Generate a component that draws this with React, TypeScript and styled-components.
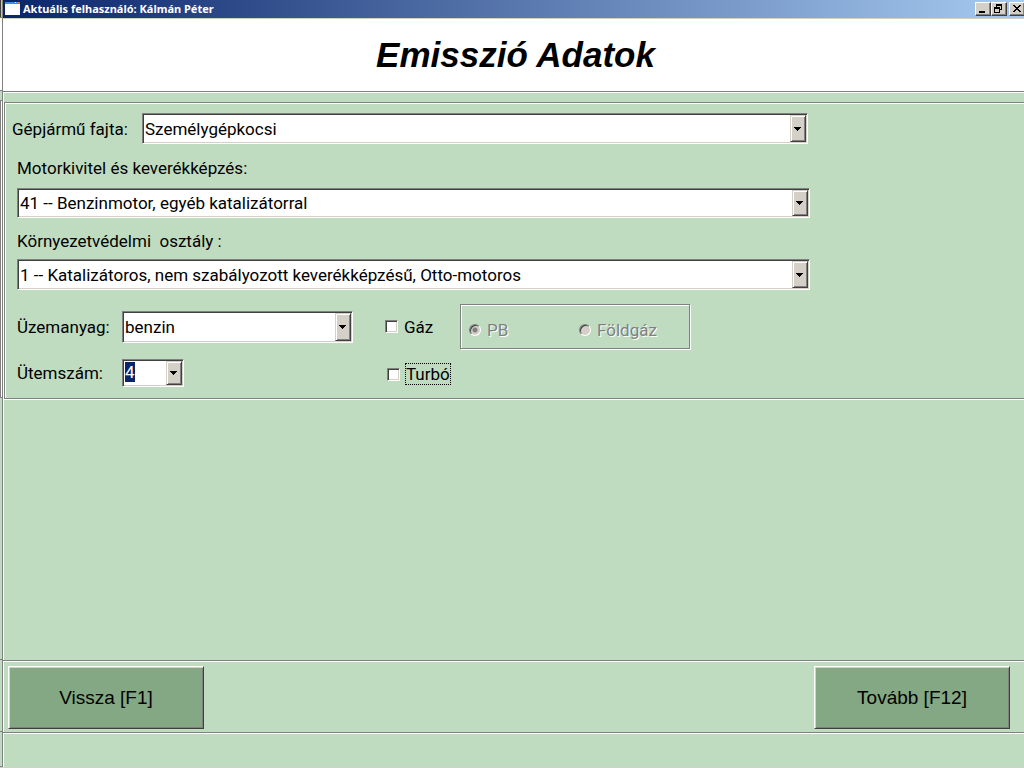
import React from "react";
import styled, { createGlobalStyle } from "styled-components";

const face = "#d4d0c8";
const green = "#c0dcc0";
const formFont = 'Roboto, "Liberation Sans", sans-serif';
const displayFont = '"Liberation Sans", Arial, sans-serif';

const GlobalStyle = createGlobalStyle`
  *, *::before, *::after { box-sizing: border-box; }
  body { margin: 0; background: ${green}; font: 17px/20px ${formFont}; color: #000; }
`;

const Screen = styled.div`
  display: flex;
  min-height: 100vh;
  border-bottom: 1px solid ${face};
`;

const BackWindowEdge = styled.div`
  display: flex;
  flex-direction: column;
  flex: none;
  width: 2px;
`;

const EdgePart = styled.div<{ $height?: number; $fill?: string; $line?: string }>`
  flex: ${(p) => (p.$height ? "none" : "1")};
  height: ${(p) => (p.$height ? `${p.$height}px` : "auto")};
  background: ${(p) => p.$fill ?? green};
  border-bottom: 1px solid #808080;
  box-shadow: ${(p) => (p.$line ? `inset 1px 0 ${p.$line}` : "none")};
`;

const Window = styled.div`
  display: flex;
  flex-direction: column;
  flex: 1;
  min-width: 0;
  border-left: 1px solid #808080;
  box-shadow: inset 1px 0 #fff;
`;

const TitleBar = styled.header`
  display: flex;
  align-items: center;
  height: 19px;
  padding: 0 0 1px 2px;
  gap: 3px;
  overflow: hidden;
  background: linear-gradient(to right, #0a246a, #a6caf0);
  border-bottom: 1px solid ${face};
`;

const TitleText = styled.span`
  flex: 1;
  color: #fff;
  font: bold 11px/16px "Noto Sans", sans-serif;
`;

const WindowButtons = styled.div`
  display: flex;
  margin-right: -1px;
`;

const WindowButton = styled.button<{ $apart?: boolean }>`
  display: block;
  width: 16px;
  height: 14px;
  margin: 0 0 0 ${(p) => (p.$apart ? 2 : 0)}px;
  padding: 0;
  border: 1px solid;
  border-color: #fff #404040 #404040 #fff;
  box-shadow: inset -1px -1px #808080;
  background: ${face};
  svg { display: block; }
`;

const Banner = styled.div`
  display: flex;
  align-items: center;
  justify-content: center;
  height: 72px;
  padding-left: 4px;
  background: #fff;
`;

const Heading = styled.h1`
  margin: 0;
  font: italic bold 35px/40px ${displayFont};
`;

const Body = styled.main`
  display: flex;
  flex-direction: column;
  flex: 1;
  padding: 10px 0 0 1px;
  border-top: 1px solid #808080;
  box-shadow: inset 1px 1px #fff;
`;

const Panel = styled.form`
  padding: 10px 0 11px 7px;
  border: solid #808080;
  border-width: 1px 0 1px 1px;
  box-shadow: inset 1px 1px #fff, 0 1px #fff;
`;

const TypeRow = styled.div`
  display: flex;
  align-items: center;
  width: 796px;
  max-width: 100%;
  label { width: 130px; flex: none; }
`;

const Fields = styled.div`
  display: flex;
  flex-direction: column;
  padding: 1px 0 0 5px;
`;

const Field = styled.div<{ $gap: number }>`
  display: flex;
  flex-direction: column;
  gap: ${(p) => p.$gap}px;
  width: 793px;
  max-width: 100%;
  padding-top: 13px;
  label { white-space: pre; }
`;

const ComboFrame = styled.div<{ $height: number; $width?: number }>`
  display: grid;
  flex: ${(p) => (p.$width ? "none" : "1 0 auto")};
  width: ${(p) => (p.$width ? `${p.$width}px` : "auto")};
  height: ${(p) => p.$height}px;
  border: 1px solid;
  border-color: #808080 #fff #fff #808080;
  background: #fff;
  box-shadow: inset 1px 1px #404040, inset -1px -1px ${face};
  padding: 1px;
`;

const ComboSelect = styled.select`
  grid-area: 1 / 1;
  appearance: none;
  width: 100%;
  min-width: 0;
  margin: 0;
  padding: 0 16px 0 1px;
  border: 0;
  border-radius: 0;
  outline: 0;
  background: transparent;
  color: #000;
  font: 17px/20px ${formFont};
`;

const ComboArrow = styled.span`
  grid-area: 1 / 1;
  justify-self: end;
  display: flex;
  align-items: center;
  justify-content: center;
  width: 16px;
  padding-right: 1px;
  border: 1px solid;
  border-color: ${face} #404040 #404040 ${face};
  background: ${face};
  box-shadow: inset 1px 1px #fff, inset -1px -1px #808080;
  pointer-events: none;
`;

const SelectedValue = styled.span`
  grid-area: 1 / 1;
  place-self: start;
  margin: 1px 0 0 1px;
  background: #0a246a;
  color: #fff;
  pointer-events: none;
`;

const Options = styled.div`
  display: grid;
  grid-template-columns: 105px 263px 75px 230px;
  grid-template-rows: 45px 28px;
  row-gap: 10px;
  align-items: center;
  padding-top: 14px;
`;

const Choice = styled.label<{ $disabled?: boolean; $indent?: boolean }>`
  display: flex;
  align-items: center;
  gap: ${(p) => (p.$indent ? 5 : 6)}px;
  padding: ${(p) => (p.$indent ? "2px 0 0 2px" : "0")};
  color: ${(p) => (p.$disabled ? "#808080" : "inherit")};
  text-shadow: ${(p) => (p.$disabled ? "1px 1px #fff" : "none")};
`;

const CheckBox = styled.input`
  appearance: none;
  width: 13px;
  height: 13px;
  margin: 0;
  outline: 0;
  border: 1px solid;
  border-color: #808080 #fff #fff #808080;
  background: #fff;
  box-shadow: inset 1px 1px #404040, inset -1px -1px ${face};
`;

const Radio = styled.input`
  appearance: none;
  width: 12px;
  height: 12px;
  margin: 0;
  border: 1px solid;
  border-color: #808080 #fff #fff #808080;
  border-radius: 50%;
  background: ${face};
  box-shadow: inset 1px 1px #404040;
  &:checked {
    background: radial-gradient(circle, #808080 2px, ${face} 3px);
  }
`;

const FocusText = styled.span`
  border: 1px dotted #000;
`;

const GasGroup = styled.fieldset`
  display: grid;
  grid-template-columns: 110px 1fr;
  align-items: center;
  height: 45px;
  margin: 0;
  padding: 7px 0 0 8px;
  border: 1px solid #808080;
  box-shadow: inset 1px 1px #fff, 1px 1px #fff;
`;

const Workspace = styled.div`
  flex: 1;
`;

const Footer = styled.footer`
  display: flex;
  justify-content: space-between;
  padding: 5px 14px 3px 5px;
  border: solid #808080;
  border-width: 1px 0;
  box-shadow: inset 0 1px #fff, 0 1px #fff;
`;

const NavButton = styled.button`
  width: 196px;
  height: 63px;
  padding: 0;
  border: 1px solid;
  border-color: #fff #404040 #404040 #fff;
  background: #84a884;
  box-shadow: inset 1px 1px ${face}, inset -1px -1px #808080;
  color: #000;
  font: 19px/24px ${displayFont};
`;

const StatusStrip = styled.div`
  height: 34px;
`;

function AppIcon() {
  return (
    <svg width="15" height="13" viewBox="0 0 15 13" shapeRendering="crispEdges" aria-hidden="true">
      <rect width="15" height="13" fill="#fff" />
      <rect width="15" height="2" fill="#3c8cf0" />
      <rect x="10" width="1" height="1" fill="#fff" />
      <rect x="12" width="2" height="1" fill="#f08040" />
    </svg>
  );
}

interface ComboProps {
  id: string;
  value: string;
  height: number;
  width?: number;
  selected?: boolean;
}

function Combo({ id, value, height, width, selected }: ComboProps) {
  return (
    <ComboFrame $height={height} $width={width}>
      <ComboSelect id={id} defaultValue={value}>
        <option>{value}</option>
      </ComboSelect>
      {selected && <SelectedValue aria-hidden="true">{value}</SelectedValue>}
      <ComboArrow aria-hidden="true">
        <svg width="7" height="4" viewBox="0 0 7 4" shapeRendering="crispEdges">
          <path d="M0 0h7v1h-1v1h-1v1h-1v1h-1v-1h-1v-1h-1v-1h-1z" />
        </svg>
      </ComboArrow>
    </ComboFrame>
  );
}

export default function App() {
  return (
    <>
      <GlobalStyle />
      <Screen>
        <BackWindowEdge>
          <EdgePart $height={18} $fill="#a6caf0" $line="#404040" />
          <EdgePart $height={73} $fill="#fff" />
          <EdgePart $height={10} />
          <EdgePart $height={297} $fill="#fff" $line="#808080" />
          <EdgePart />
          <EdgePart $height={72} />
          <EdgePart $height={35} />
        </BackWindowEdge>
        <Window>
          <TitleBar>
            <AppIcon />
            <TitleText>Aktuális felhasználó: Kálmán Péter</TitleText>
            <WindowButtons>
              <WindowButton aria-label="Minimize">
                <svg width="14" height="12" shapeRendering="crispEdges"><path d="M3 8h6v2H3z" /></svg>
              </WindowButton>
              <WindowButton aria-label="Restore">
                <svg width="14" height="12" shapeRendering="crispEdges">
                  <path fillRule="evenodd" d="M4 1h6v6H8V6h1V3H5v1H4zM2 4h6v6H2zM3 6v3h4V6z" />
                </svg>
              </WindowButton>
              <WindowButton $apart aria-label="Close">
                <svg width="14" height="12" shapeRendering="crispEdges">
                  <path d="M3 2h2v1h1v1h2v-1h1v-1h2v1h-1v1h-1v1h-1v1h1v1h1v1h1v1h-2v-1h-1v-1h-2v1h-1v1h-2v-1h1v-1h1v-1h1v-1h-1v-1h-1v-1h-1z" />
                </svg>
              </WindowButton>
            </WindowButtons>
          </TitleBar>
          <Banner>
            <Heading>Emisszió Adatok</Heading>
          </Banner>
          <Body>
            <Panel>
              <TypeRow>
                <label htmlFor="type">Gépjármű fajta:</label>
                <Combo id="type" value="Személygépkocsi" height={31} />
              </TypeRow>
              <Fields>
                <Field $gap={10}>
                  <label htmlFor="engine">Motorkivitel és keverékképzés:</label>
                  <Combo id="engine" value="41 -- Benzinmotor, egyéb katalizátorral" height={30} />
                </Field>
                <Field $gap={8}>
                  <label htmlFor="env">{"Környezetvédelmi  osztály :"}</label>
                  <Combo id="env" value="1 -- Katalizátoros, nem szabályozott keverékképzésű, Otto-motoros" height={31} />
                </Field>
                <Options>
                  <label htmlFor="fuel">Üzemanyag:</label>
                  <Combo id="fuel" value="benzin" height={32} width={231} />
                  <Choice>
                    <CheckBox type="checkbox" />
                    <span>Gáz</span>
                  </Choice>
                  <GasGroup disabled aria-label="Gáz">
                    <Choice $disabled>
                      <Radio type="radio" name="gas" defaultChecked />
                      <span>PB</span>
                    </Choice>
                    <Choice $disabled>
                      <Radio type="radio" name="gas" />
                      <span>Földgáz</span>
                    </Choice>
                  </GasGroup>
                  <label htmlFor="stroke">Ütemszám:</label>
                  <Combo id="stroke" value="4" height={28} width={62} selected />
                  <Choice $indent>
                    <CheckBox type="checkbox" />
                    <FocusText>Turbó</FocusText>
                  </Choice>
                </Options>
              </Fields>
            </Panel>
            <Workspace />
          </Body>
          <Footer>
            <NavButton type="button">Vissza [F1]</NavButton>
            <NavButton type="button">Tovább [F12]</NavButton>
          </Footer>
          <StatusStrip />
        </Window>
      </Screen>
    </>
  );
}
